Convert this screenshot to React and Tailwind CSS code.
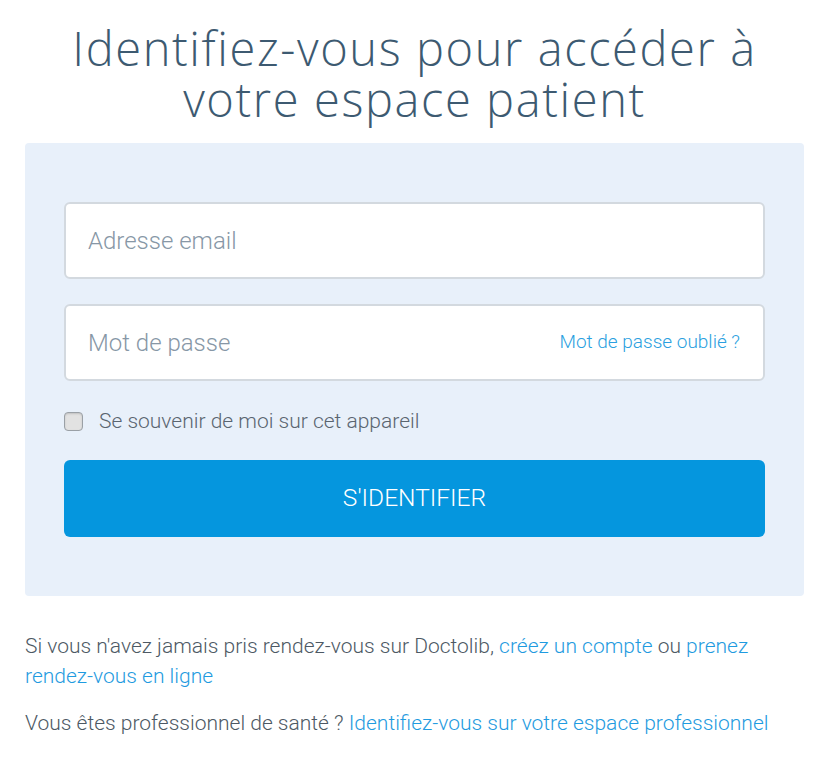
export default function App() {
  return (
    <div className="min-h-screen bg-white pl-[25px] pr-[27px] pt-[23px] font-['Roboto',sans-serif]">
      <h1 className="text-center font-['Open_Sans',sans-serif] text-[47px] font-light leading-[51px] tracking-[1.6px] text-[#3d5a71]">
        Identifiez-vous pour accéder à
        <br />
        votre espace patient
      </h1>
      <div className="mt-[18px] rounded-[4px] bg-[#e8f0fa] px-[39px] pt-[59px] pb-[59px]">
        <div className="flex h-[77px] items-center rounded-[6px] border-2 border-[#d3d9df] bg-white px-[22px]">
          <span className="text-[24px] font-light text-[#8797a6]">Adresse email</span>
        </div>
        <div className="mt-[25px] flex h-[77px] items-center justify-between rounded-[6px] border-2 border-[#d3d9df] bg-white pl-[22px] pr-[23px]">
          <span className="text-[24px] font-light text-[#8797a6]">Mot de passe</span>
          <span className="text-[19px] font-light text-[#2b9fe0]">Mot de passe oublié ?</span>
        </div>
        <label className="mt-[25px] flex items-center gap-[16px]">
          <span className="h-[19px] w-[19px] rounded-[4px] border border-[#9aa0a6] bg-[#e2e2e2] shadow-[inset_0_1px_2px_rgba(0,0,0,0.15)]" />
          <span className="text-[21px] font-light text-[#5a6570]">Se souvenir de moi sur cet appareil</span>
        </label>
        <button className="mt-[22px] flex h-[77px] w-full items-center justify-center rounded-[6px] bg-[#0596de] text-[24.5px] font-light text-white">
          S'IDENTIFIER
        </button>
      </div>
      <p className="mt-[35px] text-[21px] font-light leading-[30px] text-[#4d5964]">
        Si vous n'avez jamais pris rendez-vous sur Doctolib,{" "}
        <a className="text-[#1f9be0]">créez un compte</a> ou{" "}
        <a className="text-[#1f9be0]">prenez rendez-vous en ligne</a>
      </p>
      <p className="mt-[17px] text-[21px] font-light leading-[30px] text-[#4d5964]">
        Vous êtes professionnel de santé ?{" "}
        <a className="text-[#1f9be0]">Identifiez-vous sur votre espace professionnel</a>
      </p>
    </div>
  );
}
